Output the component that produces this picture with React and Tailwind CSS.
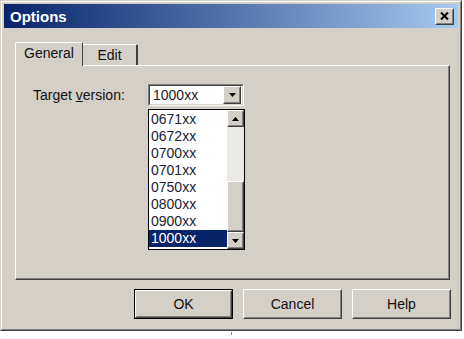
import React from 'react'

const versions = ['0671xx', '0672xx', '0700xx', '0701xx', '0750xx', '0800xx', '0900xx', '1000xx']

// classic raised 3d box: white / light on top-left, dark / shadow on bottom-right
function Raised({ className = '', children }) {
  return (
    <div className={`border border-t-white border-l-white border-b-[#404040] border-r-[#404040] ${className}`}>
      <div className="w-full h-full border border-t-[#d4d0c8] border-l-[#d4d0c8] border-b-[#808080] border-r-[#808080] bg-[#d4d0c8] flex items-center justify-center">
        {children}
      </div>
    </div>
  )
}

function Arrow({ up }) {
  return (
    <svg width="7" height="4" viewBox="0 0 7 4">
      <path d={up ? 'M0 4h7L3.5 0z' : 'M0 0h7L3.5 4z'} fill="#000" />
    </svg>
  )
}

function DialogButton({ label, isDefault }) {
  const btn = (
    <Raised className="w-full h-full">
      <span className="text-[14px] text-[#111]">{label}</span>
    </Raised>
  )
  if (isDefault) {
    return <div className="w-[99px] h-[30px] border border-black">{btn}</div>
  }
  return <div className="w-[99px] h-[30px]">{btn}</div>
}

export default function App() {
  return (
    <div className="w-[464px] h-[339px] bg-white font-['Liberation_Sans',Arial,sans-serif]">
      <div className="w-[462px] h-[331px] border border-t-[#d4d0c8] border-l-[#d4d0c8] border-b-[#404040] border-r-[#404040] bg-[#d4d0c8]">
        <div className="h-full border border-t-white border-l-white border-b-[#808080] border-r-[#808080] p-[2px] flex flex-col">
          {/* title bar */}
          <div className="h-[24px] bg-linear-to-r from-[#0a246a] to-[#a6caf0] flex items-center justify-between pl-[6px] pr-[4px]">
            <span className="text-white font-bold text-[15px] leading-none">Options</span>
            <Raised className="w-[19px] h-[17px]">
              <svg width="9" height="8" viewBox="0 0 9 8">
                <path d="M1 0.5l7 7M8 0.5l-7 7" stroke="#000" strokeWidth="2" />
              </svg>
            </Raised>
          </div>

          {/* tabs */}
          <div className="ml-[11px] mt-[14px] flex items-end">
            <div className="relative z-10 -mb-px w-[68px] h-[24px] bg-[#d4d0c8] border-t border-l border-white border-r border-r-[#404040] rounded-t-[2px] flex items-center justify-center">
              <span className="text-[14px] text-[#111] -mt-[2px]">General</span>
            </div>
            <div className="w-[55px] h-[21px] bg-[#d4d0c8] border-t border-white border-r-2 border-r-[#404040] rounded-tr-[2px] flex items-center justify-center">
              <span className="text-[14px] text-[#111]">Edit</span>
            </div>
          </div>

          {/* tab panel */}
          <div className="ml-[11px] w-[435px] h-[215px] border border-t-white border-l-white border-b-[#404040] border-r-[#404040]">
            <div className="relative w-full h-full border-r border-b border-[#808080] pt-[18px] pl-[17px] flex items-start">
              <div className="w-[115px] h-[22px] flex items-center text-[14px] text-[#111]">
                Target&nbsp;<u>v</u>ersion:
              </div>
              {/* combo box */}
              <div className="w-[96px] h-[22px] border border-t-[#808080] border-l-[#808080] border-b-white border-r-white">
                <div className="w-full h-full border border-t-[#404040] border-l-[#404040] border-b-[#d4d0c8] border-r-[#d4d0c8] bg-white flex items-center justify-between pl-[3px] pr-px">
                  <span className="text-[14px] text-[#1a1a2a]">1000xx</span>
                  <Raised className="w-[18px] h-[18px]">
                    <Arrow />
                  </Raised>
                </div>
              </div>

              {/* dropped list */}
              <div className="absolute left-[132px] top-[43px] w-[97px] h-[141px] border border-black bg-white flex">
                <div className="flex-1 flex flex-col pt-px">
                  {versions.map((v) => (
                    <div
                      key={v}
                      className={`h-[17px] pl-[2px] flex items-center text-[14px] ${
                        v === '1000xx' ? 'bg-[#0a246a] text-white' : 'text-[#1a2233]'
                      }`}
                    >
                      {v}
                    </div>
                  ))}
                </div>
                <div className="w-[17px] flex flex-col">
                  <Raised className="w-[17px] h-[17px]">
                    <Arrow up />
                  </Raised>
                  <div className="flex-1 bg-[#ebe9e5] flex flex-col justify-end">
                    <Raised className="w-[17px] h-[51px]" />
                  </div>
                  <Raised className="w-[17px] h-[17px]">
                    <Arrow />
                  </Raised>
                </div>
              </div>
            </div>
          </div>

          {/* buttons */}
          <div className="mt-[9px] mr-[7px] flex justify-end gap-[10px]">
            <DialogButton label="OK" isDefault />
            <DialogButton label="Cancel" />
            <DialogButton label="Help" />
          </div>
        </div>
      </div>
      <div className="ml-[231px] mt-px w-px h-[3px] bg-[#888]" />
    </div>
  )
}
